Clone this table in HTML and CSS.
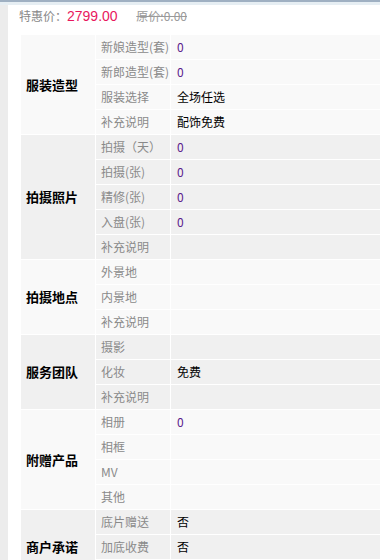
FILE: index.html
```html
<!DOCTYPE html>
<html lang="zh-CN">
<head>
    <meta charset="UTF-8">
    <title>套餐详情</title>
    <link rel="stylesheet" href="styles.css">
</head>
<body>
    <div class="topbar"></div>
    <div class="page">
        <div class="price">
            <span class="price-label">特惠价：</span><span class="price-now">2799.00</span>
            <span class="price-old">原价:0.00</span>
        </div>

        <table class="detail">
            <tbody class="odd">
                <tr><th rowspan="4">服装造型</th><td class="name">新娘造型(套)</td><td class="num">0</td></tr>
                <tr><td class="name">新郎造型(套)</td><td class="num">0</td></tr>
                <tr><td class="name">服装选择</td><td>全场任选</td></tr>
                <tr><td class="name">补充说明</td><td>配饰免费</td></tr>
            </tbody>
            <tbody class="even">
                <tr><th rowspan="5">拍摄照片</th><td class="name">拍摄（天）</td><td class="num">0</td></tr>
                <tr><td class="name">拍摄(张)</td><td class="num">0</td></tr>
                <tr><td class="name">精修(张)</td><td class="num">0</td></tr>
                <tr><td class="name">入盘(张)</td><td class="num">0</td></tr>
                <tr><td class="name">补充说明</td><td></td></tr>
            </tbody>
            <tbody class="odd">
                <tr><th rowspan="3">拍摄地点</th><td class="name">外景地</td><td></td></tr>
                <tr><td class="name">内景地</td><td></td></tr>
                <tr><td class="name">补充说明</td><td></td></tr>
            </tbody>
            <tbody class="even">
                <tr><th rowspan="3">服务团队</th><td class="name">摄影</td><td></td></tr>
                <tr><td class="name">化妆</td><td>免费</td></tr>
                <tr><td class="name">补充说明</td><td></td></tr>
            </tbody>
            <tbody class="odd">
                <tr><th rowspan="4">附赠产品</th><td class="name">相册</td><td class="num">0</td></tr>
                <tr><td class="name">相框</td><td></td></tr>
                <tr><td class="name">MV</td><td></td></tr>
                <tr><td class="name">其他</td><td></td></tr>
            </tbody>
            <tbody class="even">
                <tr><th rowspan="3">商户承诺</th><td class="name">底片赠送</td><td>否</td></tr>
                <tr><td class="name">加底收费</td><td>否</td></tr>
                <tr><td class="name"></td><td></td></tr>
            </tbody>
        </table>
    </div>
</body>
</html>
```

FILE: styles.css
```css
/* page frame */
html, body {
    margin: 0;
    padding: 0;
    height: 100%;
    overflow: hidden;
}

body {
    font-family: "Noto Sans CJK SC", "Liberation Sans", sans-serif;
    font-size: 12px;
    color: #000;
    background-color: #ececec;
}

.topbar {
    height: 2px;
    background-color: #9fb0c2;
    border-bottom: 3px solid #e6eef3;
}

.page {
    margin-left: 8px;
    padding: 0 0 20px 11px;
    background-color: #fff;
    height: 100%;
}

/* price line */
.price {
    height: 29px;
    line-height: 22px;
    color: #888;
}

.price-now {
    font-family: "Liberation Sans", Arial, sans-serif;
    font-size: 14px;
    color: #e8175d;
    margin-right: 16px;
}

.price-old {
    color: #9a9a9a;
    text-decoration: line-through;
}

.price-old,
.price-label {
    font-size: 12px;
}

/* detail table */
.detail {
    border-collapse: collapse;
    width: 362px;
    margin-left: 1px;
    table-layout: fixed;
}

.detail th,
.detail td {
    border: 1px solid #fff;
    height: 24px;
    padding: 0;
    line-height: 24px;
    text-align: left;
    white-space: nowrap;
}

.detail th {
    width: 69px;
    padding-left: 5px;
    font-size: 13px;
    font-weight: bold;
}

.detail td.name {
    width: 69px;
    padding-left: 5px;
    color: #8a8a8a;
}

.detail td {
    padding-left: 6px;
}

.detail td.num {
    color: #5a1a8c;
}

.odd {
    background-color: #f9f9f9;
}

.even {
    background-color: #f0f0f0;
}
```
